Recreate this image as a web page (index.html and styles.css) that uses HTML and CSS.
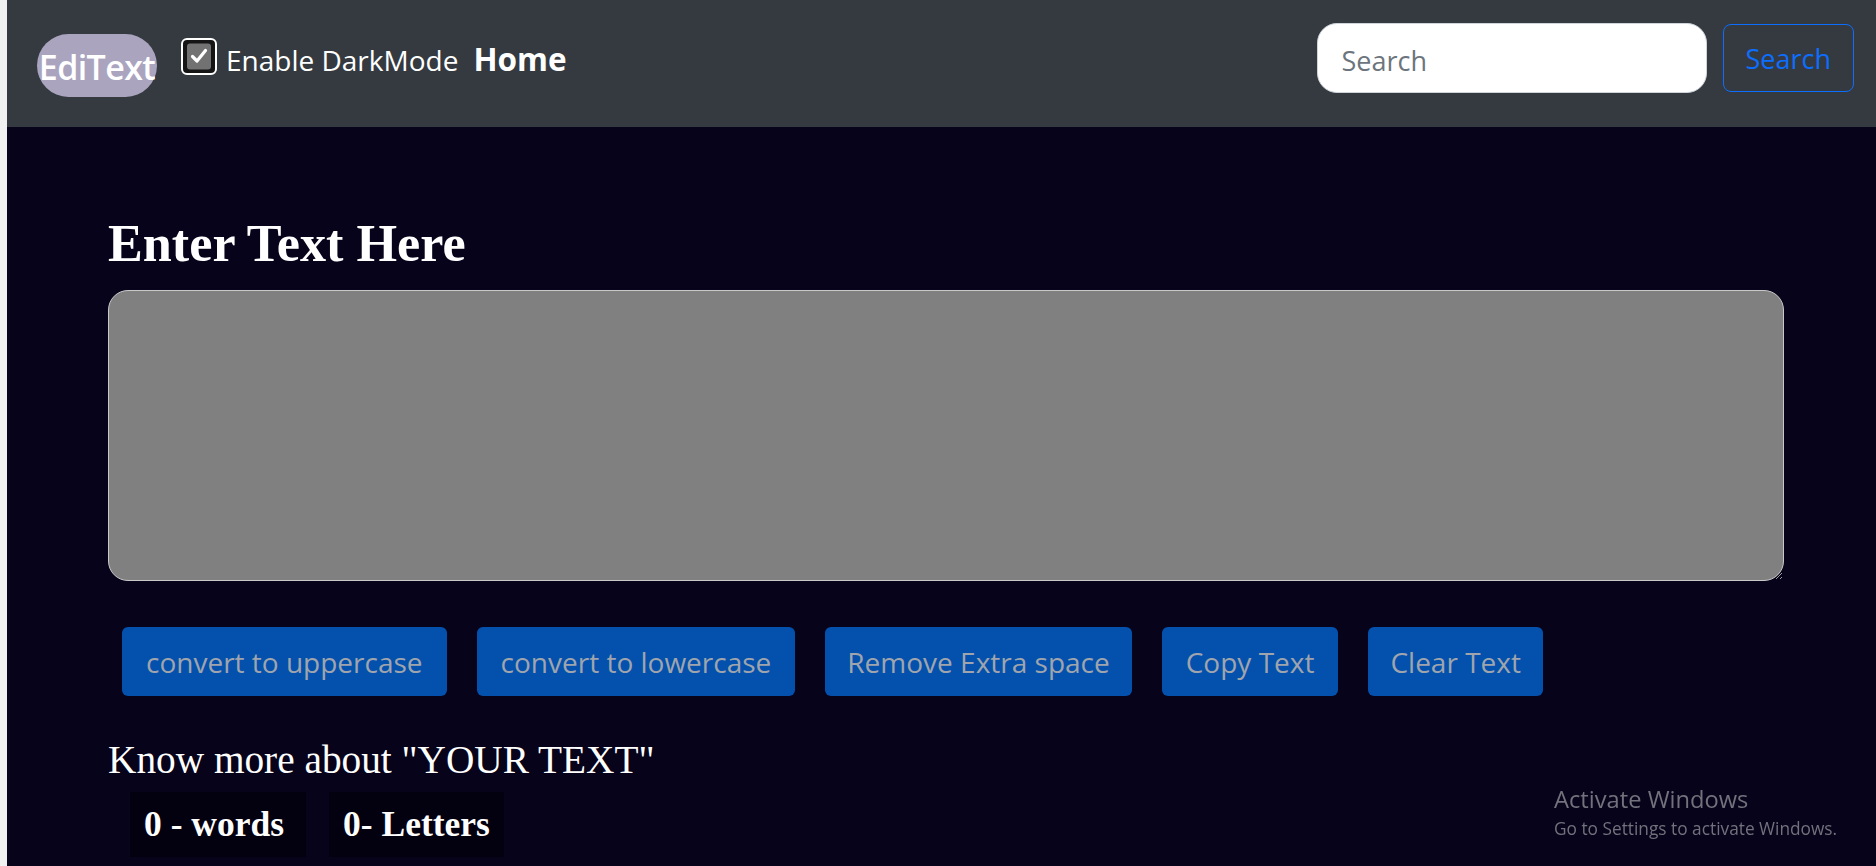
FILE: index.html
```html
<!DOCTYPE html>
<html lang="en">
<head>
<meta charset="utf-8">
<title>EdiText</title>
<link rel="stylesheet" href="styles.css">
</head>
<body>
<div class="app">
  <nav class="navbar">
    <a class="brand" href="#">EdiText</a>
    <label class="mode-toggle">
      <span class="checkbox">
        <svg width="36" height="37" viewBox="0 0 36 37">
          <rect x="1" y="1" width="34" height="35" rx="5" fill="#151515" stroke="#ffffff" stroke-width="2"/>
          <rect x="6" y="5.5" width="24" height="26" rx="3" fill="#727272"/>
          <path d="M11.5 18.5 L16 23 L24.5 12.5" fill="none" stroke="#ffffff" stroke-width="3.2" stroke-linecap="round" stroke-linejoin="round"/>
        </svg>
      </span>
      <span class="mode-text">Enable DarkMode</span>
    </label>
    <a class="nav-home" href="#">Home</a>
    <form class="search">
      <input class="search-input" type="search" placeholder="Search">
      <button class="search-btn" type="button">Search</button>
    </form>
  </nav>

  <main class="container">
    <h1 class="title">Enter Text Here</h1>
    <textarea class="editor"></textarea>
    <div class="actions">
      <button class="action" type="button">convert to uppercase</button>
      <button class="action" type="button">convert to lowercase</button>
      <button class="action action-tight" type="button">Remove Extra space</button>
      <button class="action" type="button">Copy Text</button>
      <button class="action action-tight" type="button">Clear Text</button>
    </div>
    <h2 class="summary-title">Know more about "YOUR TEXT"</h2>
    <div class="stats">
      <span class="stat stat-words">0 - words</span>
      <span class="stat">0- Letters</span>
    </div>
  </main>

  <div class="watermark">
    <div class="wm-title">Activate Windows</div>
    <div class="wm-sub">Go to Settings to activate Windows.</div>
  </div>
</div>
</body>
</html>
```

FILE: styles.css
```css
html, body {
  margin: 0;
  padding: 0;
  height: 100%;
}

body {
  background: #f1f1f1;
  display: flex;
  overflow: hidden;
}

.app {
  flex: 1;
  margin-left: 7px;
  background: #06031a;
  min-height: 100vh;
}

/* ---------- navbar ---------- */
.navbar {
  height: 127px;
  box-sizing: border-box;
  background: #343a40;
  display: flex;
  align-items: flex-start;
  padding: 0 22px 0 30px;
  font-family: "Open Sans", "Noto Sans", sans-serif;
}

.brand {
  margin-top: 34px;
  width: 120px;
  height: 63px;
  border-radius: 32px;
  background: #aaa4bf;
  color: #ffffff;
  text-decoration: none;
  font-size: 34px;
  font-weight: 600;
  line-height: 66px;
  text-align: center;
  white-space: nowrap;
  letter-spacing: -0.6px;
  overflow: visible;
}

.mode-toggle {
  display: flex;
  align-items: flex-start;
  margin-left: 24px;
}

.checkbox {
  display: block;
  margin-top: 38px;
  width: 36px;
  height: 37px;
}

.checkbox svg {
  display: block;
}

.mode-text {
  margin-left: 9px;
  margin-top: 39px;
  color: #ffffff;
  font-size: 28px;
  line-height: 42px;
  white-space: nowrap;
}

.nav-home {
  margin-left: 15px;
  margin-top: 38px;
  color: #ffffff;
  font-weight: 700;
  font-size: 31.5px;
  line-height: 42px;
  text-decoration: none;
}

.search {
  margin-left: auto;
  display: flex;
  align-items: flex-start;
  gap: 16px;
}

.search-input {
  margin-top: 23px;
  width: 390px;
  height: 70px;
  box-sizing: border-box;
  padding: 5px 24px 0;
  border: 1px solid #ced4da;
  border-radius: 20px;
  background: #ffffff;
  font-family: "Open Sans", "Noto Sans", sans-serif;
  font-size: 27px;
  color: #212529;
  outline: none;
}

.search-input::placeholder {
  color: #6c757d;
}

.search-btn {
  margin-top: 24px;
  height: 68px;
  box-sizing: border-box;
  padding: 3px 22px 0;
  border: 1px solid #0d6efd;
  border-radius: 8px;
  background: transparent;
  color: #0d6efd;
  font-family: "Open Sans", "Noto Sans", sans-serif;
  font-size: 27px;
  line-height: 1.2;
}

/* ---------- main ---------- */
.container {
  width: 1676px;
  padding-left: 101px;
}

.title {
  margin: 86px 0 16px;
  font-family: "Liberation Serif", "Times New Roman", serif;
  font-weight: 700;
  font-size: 52.2px;
  line-height: 1.17;
  color: #ffffff;
}

.editor {
  display: block;
  width: 1676px;
  height: 291px;
  box-sizing: border-box;
  margin: 0;
  padding: 12px 18px;
  border: 1px solid #c9c9c9;
  border-radius: 20px;
  background: #808080;
  color: #ffffff;
  font-family: "Open Sans", sans-serif;
  font-size: 24px;
  outline: none;
}

.actions {
  display: flex;
  gap: 30px;
  margin-top: 46px;
  padding-left: 14px;
}

.action {
  height: 69px;
  box-sizing: border-box;
  padding: 0 24px;
  border: none;
  border-radius: 6px;
  background: #0351ad;
  color: #9fa4ad;
  font-family: "Open Sans", "Noto Sans", sans-serif;
  font-size: 28px;
  line-height: 42px;
  white-space: nowrap;
}

.action-tight {
  padding: 0 22px;
}

.summary-title {
  margin: 42px 0 8px;
  font-family: "Liberation Serif", "Times New Roman", serif;
  font-weight: 400;
  font-size: 39.3px;
  line-height: 1.17;
  color: #ffffff;
}

.stats {
  display: flex;
  gap: 23px;
  padding-left: 22px;
}

.stat {
  height: 65px;
  padding: 0 14px;
  background: #030010;
  color: #ffffff;
  font-family: "Liberation Serif", "Times New Roman", serif;
  font-weight: 700;
  font-size: 35.5px;
  line-height: 65px;
  white-space: nowrap;
}

.stat-words {
  padding-right: 22px;
}

/* ---------- OS watermark overlay ---------- */
.watermark {
  position: fixed;
  left: 1554px;
  top: 785px;
  color: #72717c;
  font-family: "Open Sans", "Noto Sans", sans-serif;
  white-space: nowrap;
  pointer-events: none;
}

.wm-title {
  font-size: 23.7px;
  font-weight: 400;
  line-height: 28px;
}

.wm-sub {
  margin-top: 2px;
  font-size: 17.3px;
  font-weight: 400;
  line-height: 28px;
}
```
